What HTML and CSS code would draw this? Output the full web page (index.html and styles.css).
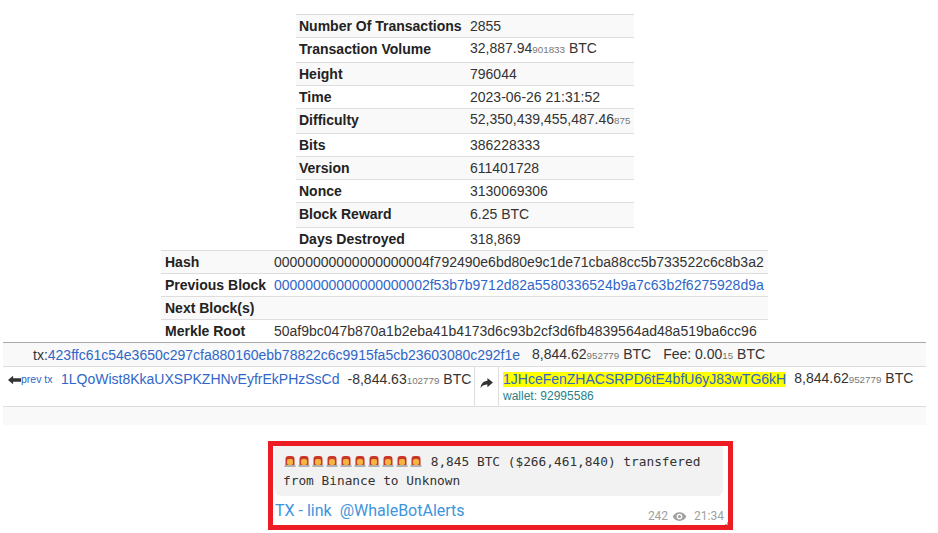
FILE: index.html
```html
<!DOCTYPE html>
<html lang="en">
<head>
<meta charset="utf-8">
<title>Block 796044</title>
<link rel="stylesheet" href="styles.css">
</head>
<body>
<main class="page">
  <table class="info info-top">
    <tr class="odd"><th>Number Of Transactions</th><td>2855</td></tr>
    <tr class="tall"><th>Transaction Volume</th><td>32,887.94<small>901833</small> BTC</td></tr>
    <tr class="odd"><th>Height</th><td>796044</td></tr>
    <tr><th>Time</th><td>2023-06-26 21:31:52</td></tr>
    <tr class="odd tall"><th>Difficulty</th><td>52,350,439,455,487.46<small>875</small></td></tr>
    <tr><th>Bits</th><td>386228333</td></tr>
    <tr class="odd"><th>Version</th><td>611401728</td></tr>
    <tr><th>Nonce</th><td>3130069306</td></tr>
    <tr class="odd tall"><th>Block Reward</th><td>6.25 BTC</td></tr>
    <tr><th>Days Destroyed</th><td>318,869</td></tr>
  </table>
  <table class="info info-hash">
    <tr class="odd"><th>Hash</th><td>00000000000000000004f792490e6bd80e9c1de71cba88cc5b733522c6c8b3a2</td></tr>
    <tr><th>Previous Block</th><td><a href="#">00000000000000000002f53b7b9712d82a5580336524b9a7c63b2f6275928d9a</a></td></tr>
    <tr class="odd"><th>Next Block(s)</th><td></td></tr>
    <tr><th>Merkle Root</th><td>50af9bc047b870a1b2eba41b4173d6c93b2cf3d6fb4839564ad48a519ba6cc96</td></tr>
  </table>
  <section class="tx">
    <div class="tx-head"><span>tx:<a href="#">423ffc61c54e3650c297cfa880160ebb78822c6c9915fa5cb23603080c292f1e</a></span><span>8,844.62<small>952779</small> BTC</span><span>Fee: 0.00<small>15</small> BTC</span></div>
    <div class="tx-body">
      <div class="tx-in">
        <a class="prev" href="#"><svg class="arrow-left" viewBox="0 0 14 10"><path d="M0 5 5.500.5V3H14v4H5.500v2.500z"/></svg>prev tx</a>
        <a href="#">1LQoWist8KkaUXSPKZHNvEyfrEkPHzSsCd</a>
        <span>-8,844.63<small>102779</small> BTC</span>
      </div>
      <div class="tx-arrow"><svg viewBox="0 0 14 12"><path d="M8 0l6 5-6 5V7C5 7 2.500 7.800.5 11 .8 6.500 3.500 3.300 8 3z"/></svg></div>
      <div class="tx-out">
        <div class="out-line"><a class="hl" href="#">1JHceFenZHACSRPD6tE4bfU6yJ83wTG6kH</a><span>8,844.62<small>952779</small> BTC</span></div>
        <div class="wallet">wallet: 92995586</div>
      </div>
    </div>
    <div class="tx-foot"></div>
  </section>
  <figure class="shot">
    <div class="msg">
      <p class="quote"><span class="sirens"><svg class="siren" viewBox="0 0 12 12"><use href="#s"/></svg><svg class="siren" viewBox="0 0 12 12"><use href="#s"/></svg><svg class="siren" viewBox="0 0 12 12"><use href="#s"/></svg><svg class="siren" viewBox="0 0 12 12"><use href="#s"/></svg><svg class="siren" viewBox="0 0 12 12"><use href="#s"/></svg><svg class="siren" viewBox="0 0 12 12"><use href="#s"/></svg><svg class="siren" viewBox="0 0 12 12"><use href="#s"/></svg><svg class="siren" viewBox="0 0 12 12"><use href="#s"/></svg><svg class="siren" viewBox="0 0 12 12"><use href="#s"/></svg><svg class="siren" viewBox="0 0 12 12"><use href="#s"/></svg></span> 8,845 BTC ($266,461,840) transfered from Binance to Unknown</p>
      <div class="links"><a href="#">TX - link</a><a href="#">@WhaleBotAlerts</a></div>
      <div class="meta"><span>242</span>
        <svg class="eye" viewBox="0 0 24 24"><path d="M12 5C7 5 3 8 1 12c2 4 6 7 11 7s9-3 11-7c-2-4-6-7-11-7zm0 11.500a4.500 4.500 0 1 1 0-9 4.500 4.500 0 0 1 0 9zm0-7a2.500 2.500 0 1 0 0 5 2.500 2.500 0 0 0 0-5z"/></svg>
        <span>21:34</span></div>
      <span class="corner"></span>
    </div>
  </figure>
  <svg class="defs" aria-hidden="true"><defs><g id="s"><rect x="0.500" y="10" width="11" height="2" fill="#b0b0b0"/><path d="M1.500 10V4a3 3 0 0 1 3-3h3a3 3 0 0 1 3 3v6z" fill="#c9362a"/><rect x="3" y="4" width="6" height="6" rx="2" fill="#f4b63f"/></g></defs></svg>
</main>
</body>
</html>
```
FILE: styles.css
```css
* { box-sizing: border-box; }
html, body { margin: 0; padding: 0; background: #fff; }
body { width: 938px; height: 533px; overflow: hidden; font: 14px/20px "Liberation Sans", Arial, sans-serif; color: #333; }
a { color: #2f66c8; text-decoration: none; }
small { font-size: 9.800px; color: #777; }
.page { display: flow-root; padding-top: 14px; }
.defs { width: 0; height: 0; display: block; }
.info { border-collapse: separate; border-spacing: 0; }
.info th, .info td { padding: 0 3px; border-top: 1px solid #ddd; text-align: left; white-space: nowrap; font-weight: normal; height: 23px; }
.info .tall th, .info .tall td { height: 25px; padding-bottom: 2px; }
.info th { font-weight: bold; color: #222; }
.odd th, .odd td { background: #f9f9f9; }
.info-top { width: 338px; margin-left: 296px; }
.info-top th { width: 170px; }
.info-top td { padding-left: 4px; }
.info-hash { margin-left: 161px; width: 607px; }
.info-hash th { width: 110px; padding-left: 4px; }
.tx { margin: 0 12px 0 3px; }
.tx-head { height: 25px; background: #f9f9f9; border-top: 1px solid #aaa; border-bottom: 1px solid #ddd; display: flex; gap: 12px; padding-left: 30px; align-items: center; }
.tx-body { display: flex; height: 40px; border-bottom: 1px solid #ddd; }
.tx-in { width: 472px; border-right: 1px solid #ddd; display: flex; gap: 8px; padding: 2px 0 0 5px; white-space: nowrap; }
.prev { font-size: 10.500px; display: flex; gap: 0; width: 45px; align-items: center; height: 20px; flex: none; }
.arrow-left { width: 13px; height: 10px; fill: #333; flex: none; margin-top: 2px; }
.tx-arrow { width: 24px; border-right: 1px solid #ddd; display: flex; justify-content: center; padding-top: 11px; }
.tx-arrow svg { width: 13px; height: 11px; fill: #333; }
.tx-out { padding: 2px 0 0 4px; }
.out-line { display: flex; gap: 8px; white-space: nowrap; height: 20px; align-items: center; }
.hl { background: #ff0; line-height: 15px; height: 15px; }
.wallet { font-size: 12px; line-height: 14px; color: #2a7f86; }
.tx-foot { height: 18px; background: #f9f9f9; }
.shot { width: 465px; height: 89px; margin: 16px 0 0 268px; border: 5px solid #ed1c24; background: #fff; }
.msg { position: relative; height: 100%; padding: 0 0 0 2px; }
.quote { margin: 0; width: 448px; height: 50px; background: #f2f2f2; border-radius: 0 0 6px 6px; padding: 6px 8px 0; font: 12.800px/19px "DejaVu Sans Mono", monospace; color: #333; }
.sirens { display: inline-flex; gap: 2px; vertical-align: -1px; margin-left: 1px; margin-right: 1px; }
.siren { width: 12px; height: 12px; }
.links { display: flex; gap: 8px; font: 16px/20px Roboto, sans-serif; margin-top: 5px; }
.links a { color: #3d95dd; }
.meta { position: absolute; right: 4px; bottom: 1px; font: 12px/16px Roboto, sans-serif; color: #a0a0a0; display: flex; align-items: center; gap: 4px; }
.eye { width: 15px; height: 15px; fill: #a0a0a0; margin-right: 3px; }
.corner { position: absolute; right: 0; bottom: 0; width: 3px; height: 3px; background: linear-gradient(135deg, transparent 50%, #8fc080 50%); }
```
